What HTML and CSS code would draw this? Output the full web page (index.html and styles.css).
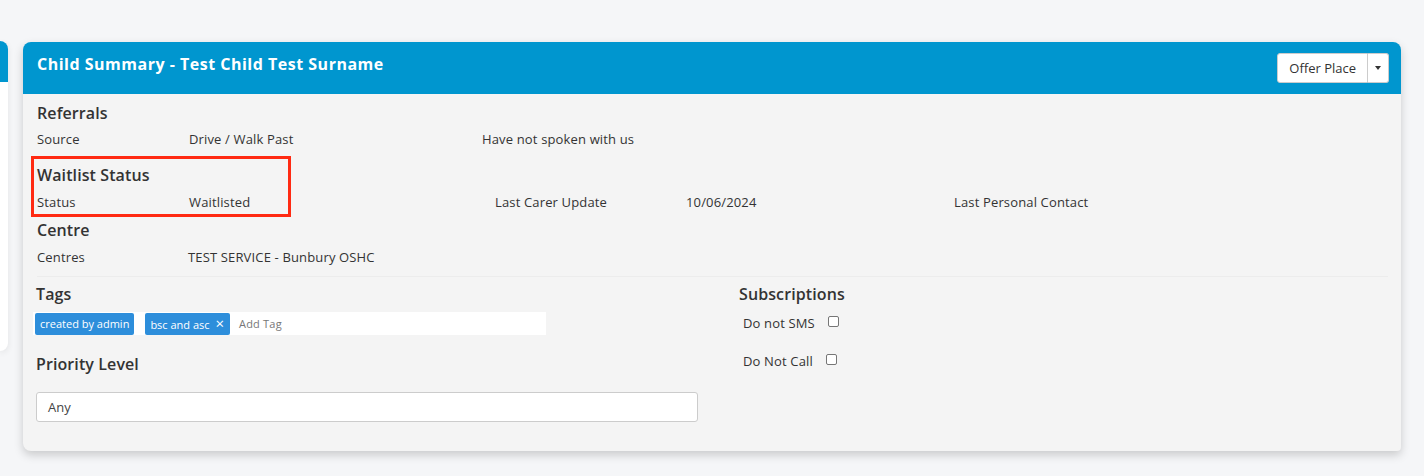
FILE: index.html
```html
<!DOCTYPE html>
<html>
<head>
<meta charset="utf-8">
<link rel="stylesheet" href="styles.css">
</head>
<body>
<div class="page">
  <div class="side-card">
    <div class="side-head"></div>
  </div>
  <div class="card">
    <div class="card-head">
      <h2 class="card-title">Child Summary - Test Child Test Surname</h2>
      <div class="btn-group">
        <button class="btn">Offer Place</button>
        <button class="btn btn-caret"><span class="caret"></span></button>
      </div>
    </div>
    <div class="card-body">
      <section class="sec">
        <h3 class="sec-title">Referrals</h3>
        <div class="row row-ref">
          <span>Source</span><span>Drive / Walk Past</span><span>Have not spoken with us</span>
        </div>
      </section>
      <section class="sec sec-wait">
        <div class="highlight"></div>
        <h3 class="sec-title">Waitlist Status</h3>
        <div class="row row-wait">
          <span>Status</span><span>Waitlisted</span><span>Last Carer Update</span><span>10/06/2024</span><span>Last Personal Contact</span>
        </div>
      </section>
      <section class="sec sec-centre">
        <h3 class="sec-title">Centre</h3>
        <div class="row row-centre">
          <span>Centres</span><span>TEST SERVICE - Bunbury OSHC</span>
        </div>
      </section>
      <div class="split">
        <div class="col-left">
          <h3 class="sec-title">Tags</h3>
          <div class="tag-input">
            <span class="tag">created by admin</span>
            <span class="tag tag-rm">bsc and asc <span class="x">×</span></span>
            <span class="placeholder">Add Tag</span>
          </div>
          <h3 class="sec-title prio">Priority Level</h3>
          <div class="select">Any</div>
        </div>
        <div class="col-right">
          <h3 class="sec-title">Subscriptions</h3>
          <div class="sub"><span>Do not SMS</span><span class="cb"></span></div>
          <div class="sub"><span>Do Not Call</span><span class="cb"></span></div>
        </div>
      </div>
    </div>
  </div>
</div>
</body>
</html>
```
FILE: styles.css
```css
* { box-sizing: border-box; }
html, body { margin: 0; padding: 0; }
body {
  background: #f5f6f8;
  font-family: "Open Sans", "Liberation Sans", sans-serif;
  color: #333;
  width: 1424px;
  height: 476px;
  overflow: hidden;
}
.page {
  display: flex;
  align-items: flex-start;
  padding-top: 41px;
}
.side-card {
  width: 8px;
  height: 310px;
  background: #fff;
  border-radius: 0 8px 8px 0;
  box-shadow: 0 2px 6px rgba(0,0,0,0.08);
  overflow: hidden;
  flex: none;
}
.side-head { height: 41px; background: #0096cf; }
.card {
  margin-left: 15px;
  margin-top: 1px;
  width: 1378px;
  height: 409px;
  background: #f4f4f4;
  border-radius: 8px 8px 4px 8px;
  box-shadow: 0 4px 10px rgba(0,0,0,0.18);
  overflow: hidden;
  flex: none;
}
.card-head {
  height: 52px;
  background: #0096cf;
  display: flex;
  justify-content: space-between;
  align-items: flex-start;
  padding: 0 12px 0 14px;
}
.card-title {
  margin: 12px 0 0;
  color: #fff;
  font-size: 16px;
  font-weight: 700;
  line-height: 20px;
  letter-spacing: 0.5px;
}
.btn-group { display: flex; margin-top: 11px; }
.btn {
  background: #fff;
  border: 1px solid #ccc;
  height: 30px;
  font-family: inherit;
  font-size: 13px;
  color: #333;
  padding: 0 11px;
  border-radius: 3px 0 0 3px;
}
.btn-caret {
  width: 21px;
  padding: 0;
  border-left: none;
  border-radius: 0 3px 3px 0;
  display: flex;
  align-items: center;
  justify-content: center;
}
.caret {
  width: 0; height: 0;
  border-left: 3.5px solid transparent;
  border-right: 3.5px solid transparent;
  border-top: 4px solid #333;
}
.card-body { padding: 8px 13px 0 14px; }
.sec-title {
  margin: 0;
  font-size: 16px;
  font-weight: 600;
  line-height: 22px;
  color: #333;
  letter-spacing: 0.1px;
}
.row {
  display: grid;
  font-size: 13px;
  line-height: 18px;
  margin-top: 7px;
  color: #333;
  letter-spacing: 0.15px;
}
.row-ref { grid-template-columns: 152px 293px 1fr; margin-top: 6px; }
.sec { position: relative; }
.sec-wait { margin-top: 16px; }
.row-wait { grid-template-columns: 152px 306px 191px 268px 1fr; }
.highlight {
  position: absolute;
  left: -6px; top: -8px;
  width: 260px; height: 61px;
  border: 3px solid #ff2a12;
}
.sec-centre { margin-top: 8px; }
.row-centre { grid-template-columns: 151px 1fr; }
.split {
  display: flex;
  margin-top: 10px;
  border-top: 1px solid #ececec;
  padding-top: 6px;
}
.col-left { width: 661px; margin-left: -1px; }
.col-right { padding-left: 42px; }
.tag-input {
  margin-top: 7px;
  margin-left: -3px;
  width: 513px;
  height: 23px;
  background: #fff;
  display: flex;
  align-items: center;
  padding-left: 2px;
  gap: 11px;
}
.tag {
  background: #2d8edb;
  color: #fff;
  font-size: 11px;
  height: 22px;
  line-height: 22px;
  padding: 0 5px;
  border-radius: 2px;
}
.tag-rm { padding-right: 6px; }
.tag .x { font-size: 15px; margin-left: 3px; line-height: 20px; }
.placeholder { font-size: 11px; color: #777; margin-left: -2px; letter-spacing: 0.2px; }
.prio { margin-top: 18px; }
.select {
  margin-top: 17px;
  width: 662px;
  height: 30px;
  background: #fff;
  border: 1px solid #ccc;
  border-radius: 3px;
  font-size: 13px;
  line-height: 28px;
  padding-left: 11px;
  color: #444;
}
.sub {
  display: flex;
  align-items: center;
  font-size: 13px;
  margin-left: 4px;
  height: 38px;
  gap: 13px;
  letter-spacing: 0.15px;
}
.sub:first-of-type { margin-top: -1px; }
.cb {
  width: 11px; height: 11px;
  border: 1px solid #767676;
  border-radius: 2px;
  background: #fff;
  margin-top: -4px;
}
```
